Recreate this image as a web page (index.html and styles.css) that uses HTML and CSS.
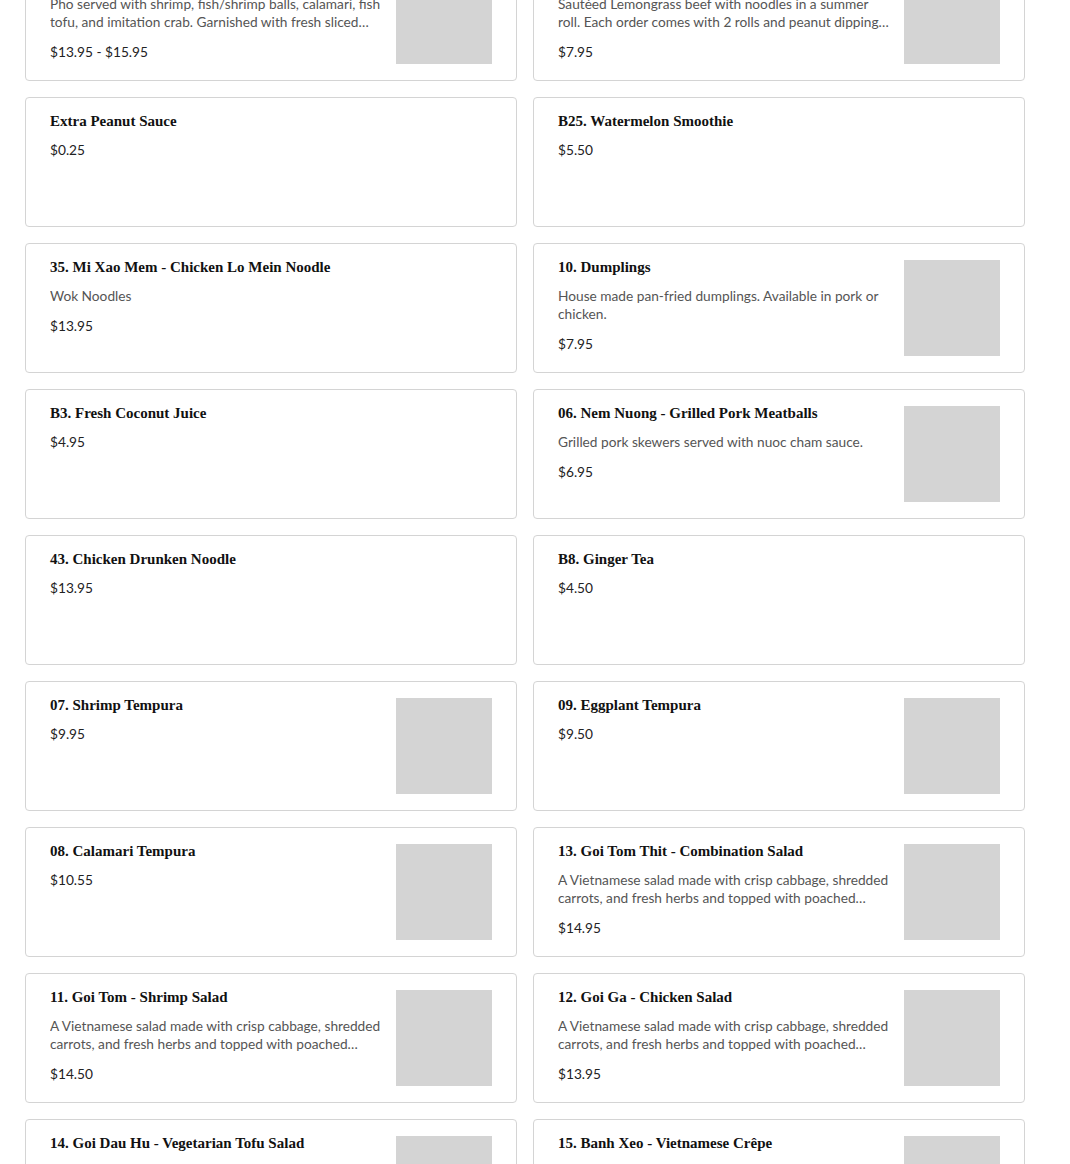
FILE: index.html
```html
<!DOCTYPE html>
<html lang="en">
<head>
    <meta charset="UTF-8">
    <meta name="viewport" content="width=device-width, initial-scale=1.0">
    <title>Menu</title>
    <link rel="stylesheet" href="styles.css">
</head>
<body>
    <!-- Menu items -->
    <section class="menu-grid">
        <div class="menu-item">
            <div class="item-info">
                <h3>24. Pho Do Bien - Seafood Pho</h3>
                <p class="item-desc">Pho served with shrimp, fish/shrimp balls, calamari, fish tofu, and imitation crab. Garnished with fresh sliced onions, cilantro and scallions.</p>
                <p class="item-price">$13.95 - $15.95</p>
            </div>
            <div class="item-thumb"></div>
        </div>
        <div class="menu-item">
            <div class="item-info">
                <h3>04. Bo Bia - Lemongrass Beef Rolls</h3>
                <p class="item-desc">Sautéed Lemongrass beef with noodles in a summer roll. Each order comes with 2 rolls and peanut dipping sauce.</p>
                <p class="item-price">$7.95</p>
            </div>
            <div class="item-thumb"></div>
        </div>

        <div class="menu-item">
            <div class="item-info">
                <h3>Extra Peanut Sauce</h3>
                <p class="item-price">$0.25</p>
            </div>
        </div>
        <div class="menu-item">
            <div class="item-info">
                <h3>B25. Watermelon Smoothie</h3>
                <p class="item-price">$5.50</p>
            </div>
        </div>

        <div class="menu-item">
            <div class="item-info">
                <h3>35. Mi Xao Mem - Chicken Lo Mein Noodle</h3>
                <p class="item-desc">Wok Noodles</p>
                <p class="item-price">$13.95</p>
            </div>
        </div>
        <div class="menu-item">
            <div class="item-info">
                <h3>10. Dumplings</h3>
                <p class="item-desc">House made pan-fried dumplings. Available in pork or chicken.</p>
                <p class="item-price">$7.95</p>
            </div>
            <div class="item-thumb"></div>
        </div>

        <div class="menu-item">
            <div class="item-info">
                <h3>B3. Fresh Coconut Juice</h3>
                <p class="item-price">$4.95</p>
            </div>
        </div>
        <div class="menu-item">
            <div class="item-info">
                <h3>06. Nem Nuong - Grilled Pork Meatballs</h3>
                <p class="item-desc">Grilled pork skewers served with nuoc cham sauce.</p>
                <p class="item-price">$6.95</p>
            </div>
            <div class="item-thumb"></div>
        </div>

        <div class="menu-item">
            <div class="item-info">
                <h3>43. Chicken Drunken Noodle</h3>
                <p class="item-price">$13.95</p>
            </div>
        </div>
        <div class="menu-item">
            <div class="item-info">
                <h3>B8. Ginger Tea</h3>
                <p class="item-price">$4.50</p>
            </div>
        </div>

        <div class="menu-item">
            <div class="item-info">
                <h3>07. Shrimp Tempura</h3>
                <p class="item-price">$9.95</p>
            </div>
            <div class="item-thumb"></div>
        </div>
        <div class="menu-item">
            <div class="item-info">
                <h3>09. Eggplant Tempura</h3>
                <p class="item-price">$9.50</p>
            </div>
            <div class="item-thumb"></div>
        </div>

        <div class="menu-item">
            <div class="item-info">
                <h3>08. Calamari Tempura</h3>
                <p class="item-price">$10.55</p>
            </div>
            <div class="item-thumb"></div>
        </div>
        <div class="menu-item">
            <div class="item-info">
                <h3>13. Goi Tom Thit - Combination Salad</h3>
                <p class="item-desc">A Vietnamese salad made with crisp cabbage, shredded carrots, and fresh herbs and topped with poached shrimp and pork.</p>
                <p class="item-price">$14.95</p>
            </div>
            <div class="item-thumb"></div>
        </div>

        <div class="menu-item">
            <div class="item-info">
                <h3>11. Goi Tom - Shrimp Salad</h3>
                <p class="item-desc">A Vietnamese salad made with crisp cabbage, shredded carrots, and fresh herbs and topped with poached shrimp.</p>
                <p class="item-price">$14.50</p>
            </div>
            <div class="item-thumb"></div>
        </div>
        <div class="menu-item">
            <div class="item-info">
                <h3>12. Goi Ga - Chicken Salad</h3>
                <p class="item-desc">A Vietnamese salad made with crisp cabbage, shredded carrots, and fresh herbs and topped with poached chicken.</p>
                <p class="item-price">$13.95</p>
            </div>
            <div class="item-thumb"></div>
        </div>

        <div class="menu-item">
            <div class="item-info">
                <h3>14. Goi Dau Hu - Vegetarian Tofu Salad</h3>
                <p class="item-desc">A Vietnamese salad made with crisp cabbage, shredded carrots, and fresh herbs and topped with fried tofu.</p>
                <p class="item-price">$12.95</p>
            </div>
            <div class="item-thumb"></div>
        </div>
        <div class="menu-item">
            <div class="item-info">
                <h3>15. Banh Xeo - Vietnamese Crêpe</h3>
                <p class="item-desc">Crispy crêpe.</p>
                <p class="item-price">$14.95</p>
            </div>
            <div class="item-thumb"></div>
        </div>
    </section>
</body>
</html>
```

FILE: styles.css
```css
/* General styling */
body {
    margin: 0;
    padding: 0;
    background-color: #ffffff;
    font-family: Lato, 'Liberation Sans', sans-serif;
    color: #222;
}

/* Menu grid (page is scrolled, first row is cut off) */
.menu-grid {
    display: grid;
    grid-template-columns: repeat(2, 492px);
    gap: 16px;
    margin: -49px 0 0 25px;
}

.menu-item {
    display: flex;
    gap: 12px;
    min-height: 130px;
    box-sizing: border-box;
    padding: 13px 24px;
    border: 1px solid #d4d4d4;
    border-radius: 4px;
    background-color: #fff;
}

.item-info {
    flex: 1;
    min-width: 0;
}

.item-info h3 {
    margin: 0 0 10px;
    font-family: 'Liberation Serif', 'Times New Roman', serif;
    font-size: 15px;
    line-height: 20px;
    font-weight: bold;
    color: #111;
}

.item-desc {
    margin: 0 0 12px;
    font-size: 13.7px;
    line-height: 18px;
    color: #555;
    display: -webkit-box;
    -webkit-line-clamp: 2;
    -webkit-box-orient: vertical;
    overflow: hidden;
}

.item-price {
    margin: 0;
    font-size: 13.7px;
    line-height: 18px;
    color: #222;
}

.item-thumb {
    align-self: center;
    width: 96px;
    height: 96px;
    flex-shrink: 0;
    background-color: #d4d4d4;
}
```
